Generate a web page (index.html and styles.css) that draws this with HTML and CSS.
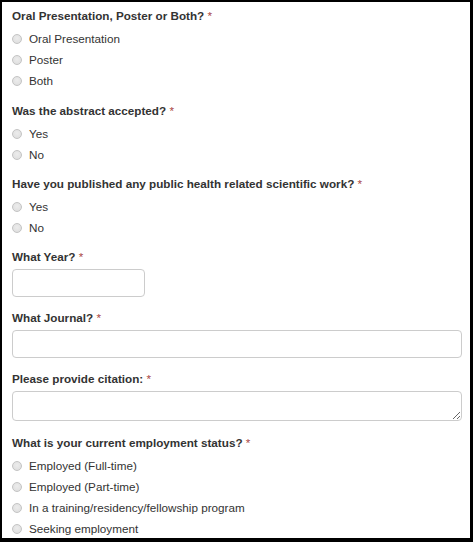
FILE: index.html
```html
<!DOCTYPE html>
<html lang="en">
<head>
<meta charset="utf-8">
<title>Form</title>
<link rel="stylesheet" href="styles.css">
</head>
<body>
<div class="frame">
  <form class="form">
    <div class="field field-first">
      <div class="label">Oral Presentation, Poster or Both? <span class="req">*</span></div>
      <label class="opt"><span class="radio"></span>Oral Presentation</label>
      <label class="opt"><span class="radio"></span>Poster</label>
      <label class="opt"><span class="radio"></span>Both</label>
    </div>
    <div class="field">
      <div class="label">Was the abstract accepted? <span class="req">*</span></div>
      <label class="opt"><span class="radio"></span>Yes</label>
      <label class="opt"><span class="radio"></span>No</label>
    </div>
    <div class="field">
      <div class="label">Have you published any public health related scientific work? <span class="req">*</span></div>
      <label class="opt"><span class="radio"></span>Yes</label>
      <label class="opt"><span class="radio"></span>No</label>
    </div>
    <div class="field field-text">
      <div class="label">What Year? <span class="req">*</span></div>
      <input class="input input-short" type="text">
    </div>
    <div class="field field-text">
      <div class="label">What Journal? <span class="req">*</span></div>
      <input class="input input-full" type="text">
    </div>
    <div class="field field-area">
      <div class="label">Please provide citation: <span class="req">*</span></div>
      <textarea class="input textarea"></textarea>
    </div>
    <div class="field">
      <div class="label">What is your current employment status? <span class="req">*</span></div>
      <label class="opt"><span class="radio"></span>Employed (Full-time)</label>
      <label class="opt"><span class="radio"></span>Employed (Part-time)</label>
      <label class="opt"><span class="radio"></span>In a training/residency/fellowship program</label>
      <label class="opt"><span class="radio"></span>Seeking employment</label>
    </div>
  </form>
</div>
</body>
</html>
```
FILE: styles.css
```css
html, body {
  margin: 0;
  padding: 0;
  background: #000;
}
body {
  width: 473px;
  height: 542px;
  overflow: hidden;
  font-family: "Liberation Sans", Arial, sans-serif;
  font-size: 11.7px;
  color: #333;
}
.frame {
  box-sizing: border-box;
  width: 473px;
  height: 542px;
  border-style: solid;
  border-color: #000;
  border-width: 2px 3px 4px 2px;
  background: #fff;
  overflow: hidden;
}
.form {
  padding: 4px 8px 0 10px;
}
.field {
  margin-bottom: 9px;
}
.field-first {
  margin-bottom: 10px;
}
.field-text {
  margin-bottom: 11px;
}
.field-area {
  margin-bottom: 12px;
}
.label {
  font-weight: bold;
  line-height: 17px;
  padding-top: 1px;
  margin-bottom: 4px;
}
.field-text .label,
.field-area .label {
  margin-bottom: 4px;
}
.req {
  color: #a94442;
  font-weight: normal;
}
.opt {
  display: flex;
  align-items: center;
  height: 21px;
  line-height: 21px;
}
.radio {
  box-sizing: border-box;
  width: 10px;
  height: 10px;
  margin: 1px 7px 0 0;
  border-radius: 50%;
  border: 1px solid #c4c4c4;
  background: radial-gradient(circle at 50% 40%, #ececec 0%, #dcdcdc 100%);
  flex: none;
}
.input {
  display: block;
  box-sizing: border-box;
  margin: 0;
  border: 1px solid #ccc;
  border-radius: 4px;
  background: #fff;
  font-family: inherit;
  font-size: 12px;
  color: #333;
  padding: 4px 8px;
  outline: none;
}
.input-short {
  width: 133px;
  height: 28px;
}
.input-full {
  width: 450px;
  height: 28px;
}
.textarea {
  width: 450px;
  height: 30px;
  resize: vertical;
}
```
